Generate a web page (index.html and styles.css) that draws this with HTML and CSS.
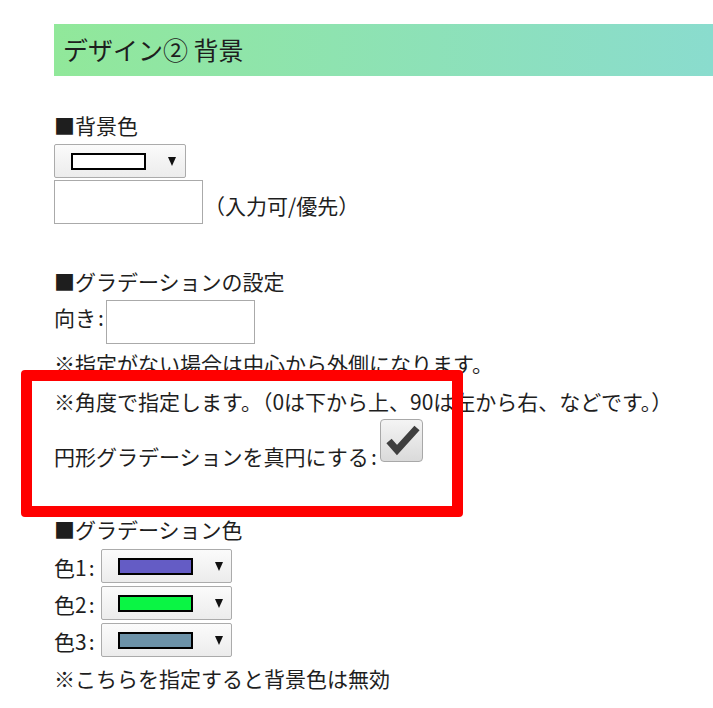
FILE: index.html
```html
<!DOCTYPE html>
<html lang="ja">
<head>
<meta charset="utf-8">
<title>デザイン② 背景</title>
<link rel="stylesheet" href="styles.css">
</head>
<body>
<div class="page">
  <h2 class="title">デザイン② 背景</h2>

  <div class="line first">■背景色</div>
  <div class="sel sel-wide"><span class="swatch sw-white"></span><span class="arrow"></span></div>
  <div class="row input-row"><span class="textbox"></span><span class="line">（入力可/優先）</span></div>

  <div class="line section">■グラデーションの設定</div>
  <div class="row dir-row"><span class="line lbl">向き<span class="colon">:</span></span><span class="textbox"></span></div>
  <div class="line">※指定がない場合は中心から外側になります。</div>
  <div class="line">※角度で指定します。（0は下から上、90は左から右、などです。）</div>
  <div class="row check-row"><span class="line check-lbl">円形グラデーションを真円にする<span class="colon">:</span></span><span class="checkbox"><svg width="43" height="43" viewBox="0 0 43 43"><polyline points="9,22 17,31 37,9" fill="none" stroke="#3f3f3f" stroke-width="7"/></svg></span></div>

  <div class="line section2">■グラデーション色</div>
  <div class="row color-row"><span class="line clbl">色1<span class="colon">:</span></span><div class="sel"><span class="swatch sw-1"></span><span class="arrow"></span></div></div>
  <div class="row color-row"><span class="line clbl">色2<span class="colon">:</span></span><div class="sel"><span class="swatch sw-2"></span><span class="arrow"></span></div></div>
  <div class="row color-row"><span class="line clbl">色3<span class="colon">:</span></span><div class="sel"><span class="swatch sw-3"></span><span class="arrow"></span></div></div>
  <div class="line">※こちらを指定すると背景色は無効</div>

  <div class="highlight"></div>
</div>
</body>
</html>
```

FILE: styles.css
```css
html, body {
  margin: 0;
  padding: 0;
  background: #ffffff;
}
body {
  font-family: "Noto Sans CJK JP", "Noto Sans", sans-serif;
  font-size: 21px;
  color: #1e1e1e;
}
.page {
  position: relative;
  padding: 24px 0 0 54px;
  height: 684px;
  overflow: hidden;
}
.title {
  margin: 0;
  height: 52px;
  line-height: 50px;
  padding-left: 9px;
  font-size: 25px;
  font-weight: normal;
  background: linear-gradient(to right, #91e89a, #8adcce);
}
.line {
  display: block;
  height: 38px;
  line-height: 38px;
  white-space: nowrap;
}
.first { margin-top: 30px; }
.section { margin-top: 38px; }
.section2 { margin-top: 38px; }
.row {
  display: flex;
}
.colon {
  display: inline-block;
  width: 10px;
  text-align: center;
}
.sel {
  position: relative;
  box-sizing: border-box;
  width: 131px;
  height: 34px;
  border: 1px solid #ababab;
  border-radius: 2px;
  background: linear-gradient(#fbfbfb, #ececec);
}
.sel-wide { width: 132px; }
.swatch {
  position: absolute;
  left: 16px;
  top: 8px;
  box-sizing: border-box;
  width: 75px;
  height: 17px;
  border: 2.5px solid #000;
}
.sw-white { background: #ffffff; }
.sw-1 { background: #645cc5; }
.sw-2 { background: #0af544; }
.sw-3 { background: #6c92a8; }
.arrow {
  position: absolute;
  left: 113px;
  top: 12px;
  width: 0;
  height: 0;
  border-left: 4.5px solid transparent;
  border-right: 4.5px solid transparent;
  border-top: 9px solid #111;
}
.textbox {
  display: block;
  box-sizing: border-box;
  width: 149px;
  height: 44px;
  border: 1px solid #aaaaaa;
  background: #fff;
}
.input-row {
  margin-top: 2px;
  align-items: flex-end;
}
.input-row .line { margin-left: 1px; }
.dir-row {
  align-items: flex-start;
}
.dir-row .lbl { margin-top: -2px; }
.check-row {
  height: 52px;
  align-items: flex-start;
}
.check-lbl {
  margin-top: 17px;
}
.checkbox {
  display: block;
  box-sizing: border-box;
  width: 43px;
  height: 43px;
  margin-left: 1px;
  margin-top: -1px;
  border: 1px solid #a8a8a8;
  border-radius: 4px;
  background: linear-gradient(#f4f4f4, #dadada);
  overflow: hidden;
}
.checkbox svg {
  display: block;
  margin: -1px 0 0 -1px;
}
.color-row {
  height: 37px;
  align-items: center;
}
.color-row .sel { margin-top: -2px; }
.clbl { margin-right: 4px; }
.highlight {
  position: absolute;
  left: 21px;
  top: 370px;
  box-sizing: border-box;
  width: 442px;
  height: 147px;
  border: 11px solid #ff0000;
  border-radius: 4px;
}
```
